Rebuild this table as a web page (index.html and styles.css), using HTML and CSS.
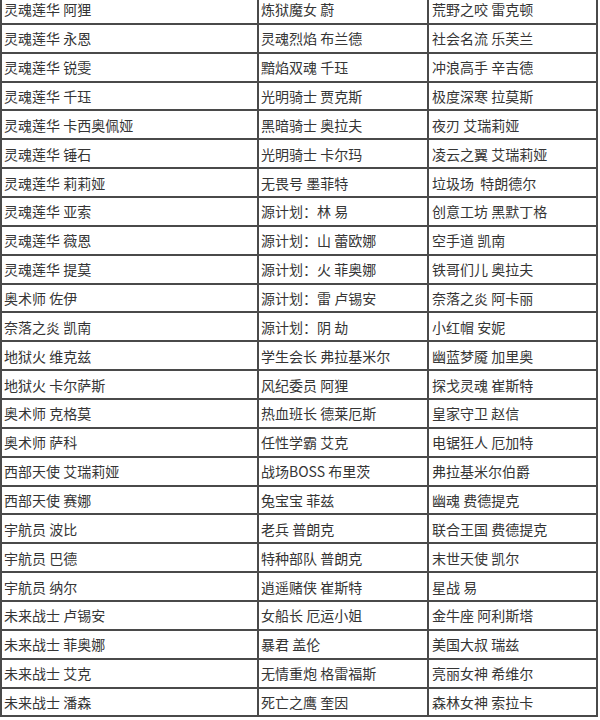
FILE: index.html
```html
<!DOCTYPE html>
<html lang="zh-CN">
<head>
<meta charset="utf-8">
<title>皮肤列表</title>
<link rel="stylesheet" href="styles.css">
</head>
<body>
<div class="grid">
<div class="c c1">灵魂莲华 阿狸</div><div class="c c2">炼狱魔女 蔚</div><div class="c c3">荒野之咬 雷克顿</div>
<div class="c c1">灵魂莲华 永恩</div><div class="c c2">灵魂烈焰 布兰德</div><div class="c c3">社会名流 乐芙兰</div>
<div class="c c1">灵魂莲华 锐雯</div><div class="c c2">黯焰双魂 千珏</div><div class="c c3">冲浪高手 辛吉德</div>
<div class="c c1">灵魂莲华 千珏</div><div class="c c2">光明骑士 贾克斯</div><div class="c c3">极度深寒 拉莫斯</div>
<div class="c c1">灵魂莲华 卡西奥佩娅</div><div class="c c2">黑暗骑士 奥拉夫</div><div class="c c3">夜刃 艾瑞莉娅</div>
<div class="c c1">灵魂莲华 锤石</div><div class="c c2">光明骑士 卡尔玛</div><div class="c c3">凌云之翼 艾瑞莉娅</div>
<div class="c c1">灵魂莲华 莉莉娅</div><div class="c c2">无畏号 墨菲特</div><div class="c c3">垃圾场&nbsp; 特朗德尔</div>
<div class="c c1">灵魂莲华 亚索</div><div class="c c2">源计划：林 易</div><div class="c c3">创意工坊 黑默丁格</div>
<div class="c c1">灵魂莲华 薇恩</div><div class="c c2">源计划：山 蕾欧娜</div><div class="c c3">空手道 凯南</div>
<div class="c c1">灵魂莲华 提莫</div><div class="c c2">源计划：火 菲奥娜</div><div class="c c3">铁哥们儿 奥拉夫</div>
<div class="c c1">奥术师 佐伊</div><div class="c c2">源计划：雷 卢锡安</div><div class="c c3">奈落之炎 阿卡丽</div>
<div class="c c1">奈落之炎 凯南</div><div class="c c2">源计划：阴 劫</div><div class="c c3">小红帽 安妮</div>
<div class="c c1">地狱火 维克兹</div><div class="c c2">学生会长 弗拉基米尔</div><div class="c c3">幽蓝梦魇 加里奥</div>
<div class="c c1">地狱火 卡尔萨斯</div><div class="c c2">风纪委员 阿狸</div><div class="c c3">探戈灵魂 崔斯特</div>
<div class="c c1">奥术师 克格莫</div><div class="c c2">热血班长 德莱厄斯</div><div class="c c3">皇家守卫 赵信</div>
<div class="c c1">奥术师 萨科</div><div class="c c2">任性学霸 艾克</div><div class="c c3">电锯狂人 厄加特</div>
<div class="c c1">西部天使 艾瑞莉娅</div><div class="c c2">战场BOSS 布里茨</div><div class="c c3">弗拉基米尔伯爵</div>
<div class="c c1">西部天使 赛娜</div><div class="c c2">兔宝宝 菲兹</div><div class="c c3">幽魂 费德提克</div>
<div class="c c1">宇航员 波比</div><div class="c c2">老兵 普朗克</div><div class="c c3">联合王国 费德提克</div>
<div class="c c1">宇航员 巴德</div><div class="c c2">特种部队 普朗克</div><div class="c c3">末世天使 凯尔</div>
<div class="c c1">宇航员 纳尔</div><div class="c c2">逍遥赌侠 崔斯特</div><div class="c c3">星战 易</div>
<div class="c c1">未来战士 卢锡安</div><div class="c c2">女船长 厄运小姐</div><div class="c c3">金牛座 阿利斯塔</div>
<div class="c c1">未来战士 菲奥娜</div><div class="c c2">暴君 盖伦</div><div class="c c3">美国大叔 瑞兹</div>
<div class="c c1">未来战士 艾克</div><div class="c c2">无情重炮 格雷福斯</div><div class="c c3">亮丽女神 希维尔</div>
<div class="c c1">未来战士 潘森</div><div class="c c2">死亡之鹰 奎因</div><div class="c c3">森林女神 索拉卡</div>
</div>
</body>
</html>
```
FILE: styles.css
```css
html, body {
  margin: 0;
  padding: 0;
  background: #ffffff;
}
body {
  overflow: hidden;
  font-family: "Noto Sans CJK SC", "Noto Sans", sans-serif;
  font-size: 14px;
  color: #353535;
}
.grid {
  display: grid;
  grid-template-columns: 257px 170px 169px;
  grid-auto-rows: 28.87px;
  width: 598px;
  box-sizing: border-box;
  margin-top: -6px;
  border-left: 2px solid #4a4a4a;
  border-top: 2px solid #4a4a4a;
}
.c {
  box-sizing: border-box;
  border-right: 2px solid #4a4a4a;
  border-bottom: 2px solid #4a4a4a;
  display: flex;
  align-items: center;
  padding-left: 2px;
  white-space: nowrap;
  line-height: 1;
}
.c1 {
  padding-left: 2px;
}
.c3 {
  padding-left: 3px;
}
```
